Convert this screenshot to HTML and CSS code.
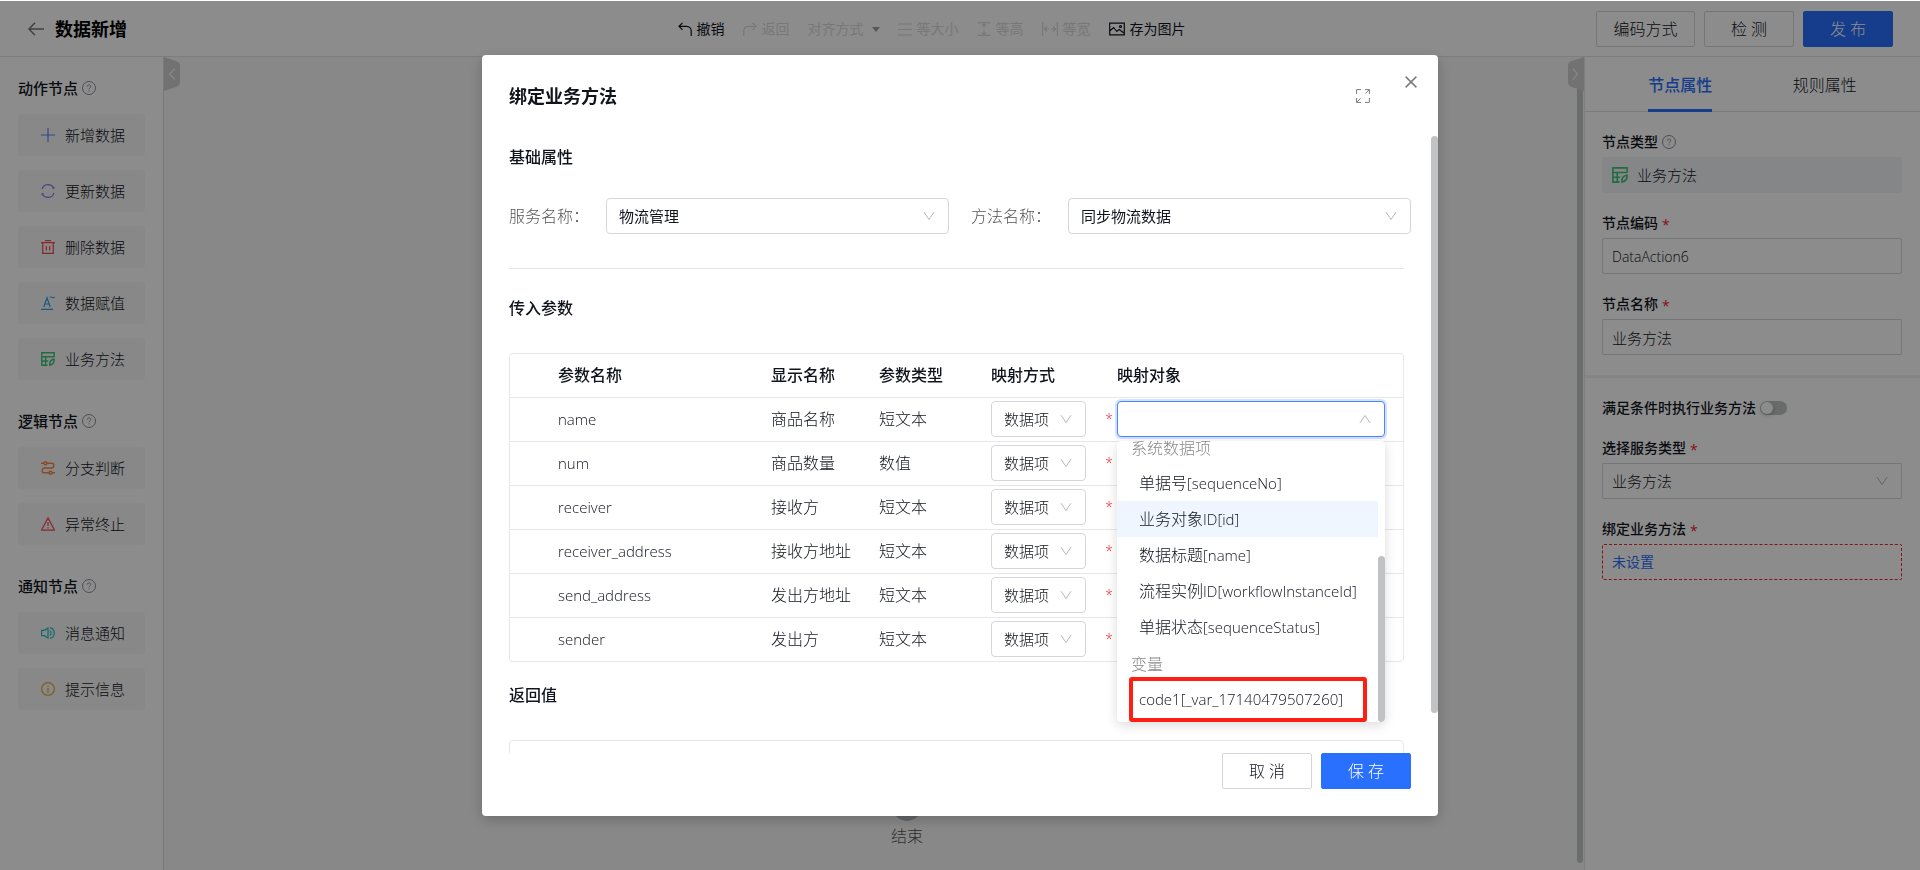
FILE: index.html
```html
<!DOCTYPE html>
<html lang="zh-CN">
<head>
<meta charset="utf-8">
<title>数据新增</title>
<link rel="stylesheet" href="styles.css">
</head>
<body>
<svg class="sprite" aria-hidden="true">
  <symbol id="i-help" viewBox="0 0 14 14"><circle cx="7" cy="7" r="6.5"/><path d="M5.2 5.6c0-1 .8-1.7 1.8-1.7s1.8.7 1.8 1.6c0 1.2-1.8 1.3-1.8 2.7M7 9.3v1.1"/></symbol>
  <symbol id="i-down" viewBox="0 0 12 12"><path d="M1 2.2l5 7.3 5-7.3"/></symbol>
  <symbol id="i-up" viewBox="0 0 12 12"><path d="M1 9.8l5-7.3 5 7.3"/></symbol>
  <symbol id="i-method" viewBox="0 0 14 14"><path d="M13.2 5V.8H.8v12.4h5.8M.8 4.8h12.4M.8 9h6.4M4.6 4.8v8.4"/><path d="M8.8 13.2c-.4-3.4 1-5.6 4.4-6 .2 3.2-1.2 5.200-4.400 6z"/></symbol>
</svg>

<div class="app">
  <header class="topbar">
    <div class="topbar-title">
      <button class="icon-btn" aria-label="返回上一页"><svg class="ic back" viewBox="0 0 16 14"><path d="M16 7H1M7 .8L1 7l6 6.200"/></svg></button>
      <h1>数据新增</h1>
    </div>
    <nav class="tools">
      <button class="tool"><svg class="ic t14" viewBox="0 0 14 14"><path d="M4.500 .8L1 4.300l3.500 3.500M1 4.300h7.500c3 0 4.700 2 4.700 4.700V14"/></svg>撤销</button>
      <button class="tool off"><svg class="ic t14" viewBox="0 0 14 14"><path d="M9.500 .8L13 4.300 9.500 7.800M13 4.300H5.500C2.500 4.300.8 6.300.8 9v5"/></svg>返回</button>
      <button class="tool off align">对齐方式<span class="caret"></span></button>
      <button class="tool off"><svg class="ic t14" viewBox="0 0 14 14"><path d="M0 2h14M0 7.500h14M0 13h14"/></svg>等大小</button>
      <button class="tool off"><svg class="ic t14" viewBox="0 0 14 16"><path d="M0 .7h14M0 15.300h14M7 2v4.500M4.500 4.500L7 2l2.500 2.500M7 9.500V14M4.500 11.500L7 14l2.500-2.500"/></svg>等高</button>
      <button class="tool off"><svg class="ic t16" viewBox="0 0 16 14"><path d="M.7 0v14M15.300 0v14M2.500 7H7M5 4.500L2.500 7 5 9.500M9 7h4.500M11 4.500L13.500 7 11 9.500"/></svg>等宽</button>
      <button class="tool"><svg class="ic t16" viewBox="0 0 16 13"><path d="M.7 .7h14.600v11.600H.7zM.7 8.500L4.600 5l3.200 4 2.400-2 4.800 3.500"/><circle cx="11.500" cy="4" r="1"/></svg>存为图片</button>
    </nav>
    <div class="actions">
      <button class="btn wide">编码方式</button>
      <button class="btn">检 测</button>
      <button class="btn primary">发 布</button>
    </div>
  </header>

  <div class="workspace">
    <aside class="palette">
      <section>
        <h2>动作节点<svg class="help"><use href="#i-help"/></svg></h2>
        <button class="node"><svg class="ic n blue" viewBox="0 0 14 14"><path d="M7 0v14M0 7h14"/></svg>新增数据</button>
        <button class="node"><svg class="ic n purple" viewBox="0 0 14 14"><path d="M1 5.200A6.200 6.200 0 0 1 12.600 4.300M13 8.800A6.200 6.200 0 0 1 1.400 9.700"/><path d="M13.400 2.200v2.600h-2.600zM.6 11.800V9.200h2.600z" fill="currentColor" stroke="none"/></svg>更新数据</button>
        <button class="node"><svg class="ic n red" viewBox="0 0 14 14"><path d="M0 2.600h14M4 .6h6M1.700 2.600v10.700h10.600V2.600M5.300 6v4.500M8.700 6v4.500"/></svg>删除数据</button>
        <button class="node"><svg class="ic n cyan" viewBox="0 0 14 14"><path d="M0 13.300h12M2.800 11L6 1.800 9.200 11M4 8h4"/><path d="M8.500 1.400c1.500-1.400 3 1 5 0" /></svg>数据赋值</button>
        <button class="node"><svg class="ic n green"><use href="#i-method"/></svg>业务方法</button>
      </section>
      <section>
        <h2>逻辑节点<svg class="help"><use href="#i-help"/></svg></h2>
        <button class="node"><svg class="ic n orange" viewBox="0 0 14 14"><path d="M0 2.200h3M6 2.200h4.500a2.400 2.400 0 0 1 0 4.800h-7a2.400 2.400 0 0 0 0 4.800H8M11 11.800h3"/><circle cx="4.500" cy="2.200" r="1.500"/><circle cx="9.500" cy="11.800" r="1.500"/></svg>分支判断</button>
        <button class="node"><svg class="ic n red" viewBox="0 0 14 14"><path d="M7 .9L13.600 13.200H.4zM7 5v4M7 10.200v1.400"/></svg>异常终止</button>
      </section>
      <section>
        <h2>通知节点<svg class="help"><use href="#i-help"/></svg></h2>
        <button class="node"><svg class="ic n teal" viewBox="0 0 14 14"><path d="M.6 4.300h2.800L7 2v10L3.400 9.700H.6zM8.800 4.800c1.700.8 1.700 3.600 0 4.400M9 1.800c5.600.6 5.600 9.800 0 10.400"/></svg>消息通知</button>
        <button class="node"><svg class="ic n gold" viewBox="0 0 14 14"><circle cx="7" cy="7" r="6.400"/><path d="M7 6v5M7 3.400v1.400"/></svg>提示信息</button>
      </section>
    </aside>

    <main class="canvas">
      <button class="fold fold-left" aria-label="收起左侧"><svg viewBox="0 0 16 34"><path class="plate" d="M0 0l12 4q4 1 4 5v16q0 4-4 5L0 34z"/><path class="mark" d="M11 11.500L5.500 17l5.500 5.500"/></svg></button>
      <div class="end-node"><span class="end-dot"></span><span>结束</span></div>
      <button class="fold fold-right" aria-label="收起右侧"><svg viewBox="0 0 16 34"><path class="plate" d="M16 0L4 4Q0 5 0 9v16q0 4 4 5l12 4z"/><path class="mark" d="M5 11.500l4.500 5.500L5 22.500"/></svg></button>
      <span class="canvas-bar"></span>
    </main>

    <aside class="props">
      <nav class="tabs">
        <button class="tab active"><span>节点属性</span></button>
        <button class="tab"><span>规则属性</span></button>
      </nav>
      <div class="group">
        <div class="field">
          <span class="lab">节点类型<svg class="help"><use href="#i-help"/></svg></span>
          <div class="type-box"><svg class="ic t16 green"><use href="#i-method"/></svg>业务方法</div>
        </div>
        <div class="field">
          <label class="lab" for="code">节点编码<i>*</i></label>
          <input class="control code-input" id="code" value="DataAction6">
        </div>
        <div class="field">
          <label class="lab" for="nname">节点名称<i>*</i></label>
          <input class="control" id="nname" value="业务方法">
        </div>
      </div>
      <div class="group">
        <div class="switch-row"><label class="lab" for="cond">满足条件时执行业务方法</label><input type="checkbox" role="switch" class="switch" id="cond"></div>
        <div class="field">
          <label class="lab" for="svc">选择服务类型<i>*</i></label>
          <div class="pick"><select class="control" id="svc"><option>业务方法</option></select><svg class="chev"><use href="#i-down"/></svg></div>
        </div>
        <div class="field">
          <span class="lab">绑定业务方法<i>*</i></span>
          <button class="unset">未设置</button>
        </div>
      </div>
    </aside>
  </div>
</div>

<div class="mask">
  <div class="modal" role="dialog" aria-modal="true" aria-labelledby="mt">
    <header class="modal-head">
      <h2 id="mt">绑定业务方法</h2>
      <button class="icon-btn expand" aria-label="全屏"><svg class="ic t14" viewBox="0 0 14 14"><path d="M.6 5V.6H5M9 .6h4.400V5M13.400 .6L9.400 4.600M13.400 9v4.400H9M5 13.400H.6V9M.6 13.400l4-4"/></svg></button>
      <button class="icon-btn close" aria-label="关闭"><svg class="ic" viewBox="0 0 12 12"><path d="M.6 .6l10.800 10.800M11.400 .6L.6 11.400"/></svg></button>
    </header>
    <div class="modal-body">
      <h3>基础属性</h3>
      <div class="names">
        <label for="sname">服务名称：</label>
        <div class="pick"><select class="control" id="sname"><option>物流管理</option></select><svg class="chev"><use href="#i-down"/></svg></div>
        <label for="mname">方法名称：</label>
        <div class="pick"><select class="control" id="mname"><option>同步物流数据</option></select><svg class="chev"><use href="#i-down"/></svg></div>
      </div>
      <hr>
      <h3>传入参数</h3>
      <table class="params">
        <thead><tr><th class="c1">参数名称</th><th class="c2">显示名称</th><th class="c3">参数类型</th><th class="c4">映射方式</th><th>映射对象</th></tr></thead>
        <tbody>
          <tr><td class="c1">name</td><td>商品名称</td><td>短文本</td><td><div class="map"><div class="pick small"><select class="control" aria-label="映射方式"><option>数据项</option></select><svg class="chev"><use href="#i-down"/></svg></div><i>*</i></div></td>
            <td><div class="pick target"><select class="control open" aria-label="映射对象"><option></option></select><svg class="chev"><use href="#i-up"/></svg>
              <div class="menu" role="listbox">
                <div class="menu-group">系统数据项</div>
                <div class="menu-item" role="option">单据号<span class="key">[sequenceNo]</span></div>
                <div class="menu-item hover" role="option">业务对象<span class="key">ID[id]</span></div>
                <div class="menu-item" role="option">数据标题<span class="key">[name]</span></div>
                <div class="menu-item" role="option">流程实例<span class="key">ID[workflowInstanceId]</span></div>
                <div class="menu-item" role="option">单据状态<span class="key">[sequenceStatus]</span></div>
                <div class="menu-group">变量</div>
                <div class="menu-item marked" role="option"><span class="key">code1[_var_17140479507260]</span></div>
                <span class="menu-bar"></span>
              </div></div></td></tr>
          <tr><td class="c1">num</td><td>商品数量</td><td>数值</td><td><div class="map"><div class="pick small"><select class="control" aria-label="映射方式"><option>数据项</option></select><svg class="chev"><use href="#i-down"/></svg></div><i>*</i></div></td><td></td></tr>
          <tr><td class="c1">receiver</td><td>接收方</td><td>短文本</td><td><div class="map"><div class="pick small"><select class="control" aria-label="映射方式"><option>数据项</option></select><svg class="chev"><use href="#i-down"/></svg></div><i>*</i></div></td><td></td></tr>
          <tr><td class="c1">receiver_address</td><td>接收方地址</td><td>短文本</td><td><div class="map"><div class="pick small"><select class="control" aria-label="映射方式"><option>数据项</option></select><svg class="chev"><use href="#i-down"/></svg></div><i>*</i></div></td><td></td></tr>
          <tr><td class="c1">send_address</td><td>发出方地址</td><td>短文本</td><td><div class="map"><div class="pick small"><select class="control" aria-label="映射方式"><option>数据项</option></select><svg class="chev"><use href="#i-down"/></svg></div><i>*</i></div></td><td></td></tr>
          <tr><td class="c1">sender</td><td>发出方</td><td>短文本</td><td><div class="map"><div class="pick small"><select class="control" aria-label="映射方式"><option>数据项</option></select><svg class="chev"><use href="#i-down"/></svg></div><i>*</i></div></td><td></td></tr>
        </tbody>
      </table>
      <h3>返回值</h3>
      <div class="returns"></div>
      <span class="body-bar"></span>
    </div>
    <footer class="modal-foot">
      <button class="btn">取 消</button>
      <button class="btn primary">保 存</button>
    </footer>
  </div>
</div>
</body>
</html>
```
FILE: styles.css
```css
* { box-sizing: border-box; }
body {
  margin: 0;
  font-family: "Open Sans", "Noto Sans CJK SC", sans-serif;
  font-size: 15px;
  font-weight: 300;
  line-height: 22px;
  color: #10141c;
  background: #fff;
  overflow: hidden;
}
button, input, select { font: inherit; color: inherit; margin: 0; }
button { border: 0; padding: 0; background: none; }
h1, h2, h3 { margin: 0; font-weight: 500; }
i { font-style: normal; color: #f5222d; }
.sprite { position: absolute; width: 0; height: 0; }
.sprite symbol, .ic, .chev, .help { fill: none; stroke: currentColor; }
.ic { display: block; flex: none; width: 12px; height: 12px; stroke-width: 1.2; }
.t14 { width: 14px; height: 14px; }
.t16 { width: 16px; height: 16px; }
.n { width: 14px; height: 14px; }
.help { width: 14px; height: 14px; color: #8a8f96; stroke-width: 1; flex: none; }

.blue { color: #5588ff; }
.purple { color: #8f78ea; }
.red { color: #f24a55; }
.cyan { color: #2aa5e6; }
.green { color: #3cc477; stroke-width: 1.4; }
.orange { color: #f58a48; stroke-width: 1.4; }
.teal { color: #20c0c0; }
.gold { color: #e8aa38; }

.app { display: flex; flex-direction: column; height: 100vh; }

/* Top bar */
.topbar {
  display: flex;
  align-items: center;
  justify-content: space-between;
  height: 57px;
  padding: 2px 27px 0 28px;
  border-bottom: 1px solid #e2e4e8;
}
.topbar-title { display: flex; align-items: center; gap: 11px; width: 297px; }
.topbar-title h1 { font-size: 18px; line-height: 26px; font-weight: 600; color: #000; }
.back { width: 16px; height: 14px; color: #777; stroke-width: 1.5; }
.tools { display: flex; align-items: center; gap: 18px; font-size: 14px; margin-right: 58px; }
.tool { display: flex; align-items: center; gap: 5px; font-weight: 400; }
.tool.off { color: #dadada; }
.tool.align { gap: 8px; }
.caret { border: 4px solid transparent; border-top: 5px solid #a0a0a0; border-bottom: 0; }
.actions { display: flex; gap: 9px; }
.btn {
  min-width: 90px;
  height: 36px;
  padding: 0 12px;
  border: 1px solid #d4d6d9;
  border-radius: 2px;
  background: #fff;
  font-size: 16px;
}
.btn.wide { min-width: 99px; }
.btn.primary { border-color: #2970ff; background: #2970ff; color: #fff; }

.workspace { display: flex; flex: 1; min-height: 0; }

/* Left palette */
.palette { width: 164px; flex: none; padding: 19px 18px; border-right: 1px solid #dcdee0; }
.palette section { display: flex; flex-direction: column; gap: 14px; margin-bottom: 29px; }
.palette h2 { display: flex; align-items: center; gap: 4px; font-size: 15px; line-height: 24px; }
.node {
  display: flex;
  align-items: center;
  gap: 10px;
  height: 42px;
  padding-left: 23px;
  border-radius: 4px;
  background: #f7f7f7;
}

/* Canvas */
.canvas { position: relative; flex: 1; background: #f7f7f7; }
.fold { position: absolute; top: 0; width: 16px; height: 34px; z-index: 1; }
.fold svg { display: block; width: 16px; height: 34px; }
.fold-left { left: 0; }
.fold-right { right: 0; }
.plate { fill: #cfd0d0; }
.mark { fill: none; stroke: #f4f4f4; stroke-width: 1.2; }
.canvas-bar { position: absolute; top: 20px; right: 1px; bottom: 7px; width: 6px; background: #c4c6c6; border-radius: 3px; }
.end-node {
  position: absolute;
  top: 734px;
  left: 743px;
  transform: translateX(-50%);
  display: flex;
  flex-direction: column;
  align-items: center;
  gap: 4px;
  font-size: 16px;
  color: #555;
}
.end-dot { width: 30px; height: 30px; border-radius: 50%; background: #b8babd; }

/* Right properties */
.props { width: 336px; flex: none; border-left: 1px solid #e8e8e8; }
.tabs { display: flex; padding: 0 23px; border-bottom: 1px solid #dfe1e4; height: 55px; }
.tab { flex: 1; height: 55px; font-size: 16px; }
.tab span { display: inline-block; height: 55px; line-height: 56px; }
.tab.active { color: #2970ff; font-weight: 500; }
.tab.active span { border-bottom: 3px solid #2970ff; }
.group { display: flex; flex-direction: column; gap: 20px; padding: 20px 18px 20px 17px; }
.group + .group { border-top: 3px solid #f2f2f3; }
.field { display: flex; flex-direction: column; gap: 5px; }
.lab { display: flex; align-items: center; gap: 4px; font-size: 14px; line-height: 20px; font-weight: 500; color: #10141c; }
.lab i { font-weight: 400; line-height: 16px; padding-top: 4px; }
.control {
  display: block;
  width: 100%;
  height: 36px;
  padding: 0 9px;
  border: 1px solid #d4d6d9;
  border-radius: 2px;
  background: #fff;
  appearance: none;
  outline: none;
}
.props .control { background: transparent; }
.code-input { font-size: 14px; }
.type-box { display: flex; align-items: center; gap: 9px; height: 36px; padding-left: 10px; border-radius: 3px; background: #f2f4f7; }
.switch-row { display: flex; align-items: center; gap: 4px; }
.switch { appearance: none; width: 27px; height: 14px; border-radius: 7px; background: #bfc1c1; display: flex; align-items: center; }
.switch::before { content: ""; width: 12px; height: 12px; margin-left: 1px; border-radius: 50%; background: #fff; box-shadow: 0 2px 4px rgba(0, 35, 11, .2); }
.unset { height: 36px; padding: 0 9px; border: 1px dashed #f5222d; border-radius: 2px; text-align: left; font-size: 14px; color: #2970ff; font-weight: 400; }
.pick { position: relative; }
.chev { position: absolute; top: 12px; right: 14px; width: 12px; height: 12px; color: #b4b6ba; pointer-events: none; }

/* Modal */
.mask {
  position: fixed;
  inset: 1px 0 0;
  z-index: 10;
  display: flex;
  justify-content: center;
  align-items: flex-start;
  padding: 54px 16px;
  background: rgba(0, 0, 0, .45);
}
.modal {
  display: flex;
  flex-direction: column;
  width: 956px;
  max-width: 100%;
  height: 100%;
  padding-bottom: 27px;
  border-radius: 4px;
  background: #fff;
  box-shadow: 0 4px 14px rgba(0, 0, 0, .2);
}
.modal-head { display: flex; align-items: center; height: 81px; padding: 0 21px 0 27px; flex: none; }
.modal-head h2 { flex: 1; font-size: 18px; line-height: 26px; font-weight: 600; }
.icon-btn { display: flex; color: #7c7c7c; }
.expand { margin-right: 35px; }
.expand .ic { stroke-width: 1; }
.close { margin-bottom: 27px; }
.close .ic { stroke-width: 1.5; }
.modal-body { position: relative; flex: 1; min-height: 0; padding: 9px 34px 0 27px; overflow: hidden; }
.modal-body h3 { font-size: 16px; line-height: 24px; }
.names { display: grid; grid-template-columns: 97px 1fr 119px 1fr; align-items: center; margin: 29px -7px 34px 0; }
.names label { font-size: 16px; color: #555; }
.names .pick + label { padding-left: 22px; }
.names .control { padding: 0 12px; border-radius: 4px; font-weight: 400; }
.modal-body hr { height: 1px; margin: 0 0 27px; border: 0; background: #e4e5e7; }
.params {
  width: 100%;
  margin: 33px 0 21px;
  border: 1px solid #e6e7e9;
  border-radius: 4px;
  border-spacing: 0;
  table-layout: fixed;
  font-size: 16px;
}
.params th { height: 44px; padding: 0 0 1px; border-bottom: 1px solid #e6e7e9; text-align: left; font-weight: 500; }
.params td { height: 44px; padding: 3px 0 4px; border-bottom: 1px solid #e6e7e9; line-height: 24px; }
.params tr:last-child td { border-bottom: 0; height: 43px; }
.params .c1 { width: 261px; padding-left: 48px; }
.params td.c1 { font-size: 15px; }
.c2 { width: 108px; }
.c3 { width: 112px; }
.c4 { width: 126px; }
.map { display: flex; align-items: center; justify-content: space-between; padding-right: 4px; }
.map i { font-size: 14px; }
.small { width: 95px; }
.small .control { padding: 0 12px; border-radius: 4px; font-size: 15px; }
.target { width: 268px; }
.control.open { border-color: #4a86ff; border-radius: 4px; box-shadow: 0 0 0 2px rgba(41, 112, 255, .2); }
.menu {
  position: absolute;
  top: 40px;
  left: 0;
  z-index: 2;
  display: flex;
  flex-direction: column;
  justify-content: flex-end;
  width: 100%;
  height: 281px;
  padding-bottom: 5px;
  border-radius: 4px;
  background: #fff;
  box-shadow: 0 3px 12px rgba(0, 0, 0, .15);
  overflow: hidden;
  white-space: nowrap;
}
.menu-group { flex: none; padding: 2px 0 0 14px; line-height: 34px; color: #888; }
.menu-item { flex: none; position: relative; height: 36px; margin-right: 7px; padding-left: 22px; line-height: 36px; }
.menu-item.hover { background: #eff6ff; }
.key { font-size: 15px; }
.marked::after { content: ""; position: absolute; inset: -4px 11px -5px 12px; border: 4px solid #ff1e12; border-radius: 3px; }
.menu-bar { position: absolute; right: 0; bottom: 0; width: 7px; height: 166px; border-radius: 4px; background: #c1c2c4; }
.returns { height: 160px; margin-top: 33px; border: 1px solid #e6e7e9; border-radius: 4px; }
.body-bar { position: absolute; top: 0; right: 0; width: 7px; height: 577px; border-radius: 4px; background: #c1c2c4; }
.modal-foot { display: flex; flex: none; justify-content: flex-end; gap: 9px; padding: 0 27px; }
```
